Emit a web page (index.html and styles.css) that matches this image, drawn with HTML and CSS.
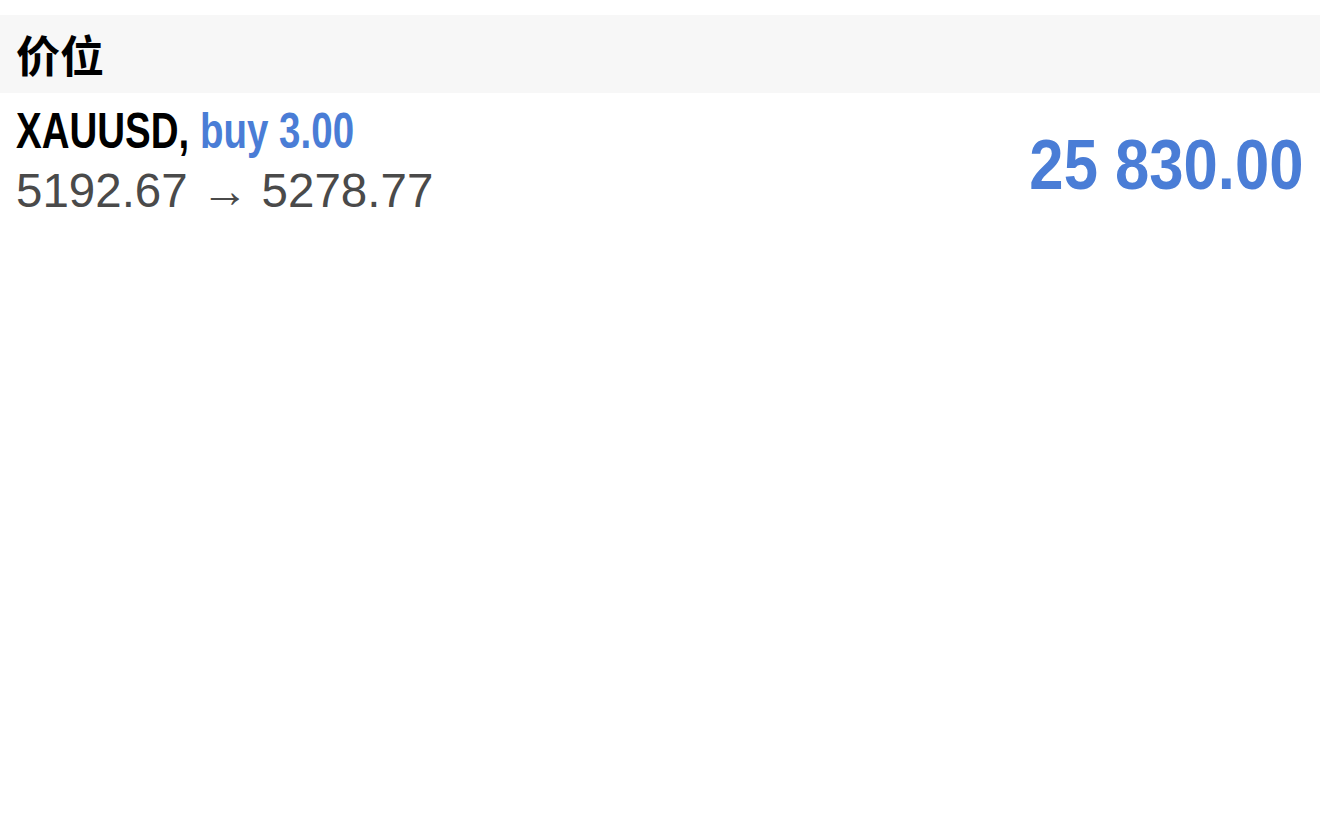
FILE: index.html
```html
<!DOCTYPE html>
<html lang="zh-CN">
<head>
<meta charset="utf-8">
<title>价位</title>
<link rel="stylesheet" href="styles.css">
</head>
<body>
<div class="page">
  <div class="section-header">价位</div>
  <div class="position-row">
    <div class="position-info">
      <div class="position-title"><span class="condensed title-text"><span class="symbol">XAUUSD,</span> <span class="side">buy 3.00</span></span></div>
      <div class="position-prices">5192.67 → 5278.77</div>
    </div>
    <div class="position-profit"><span class="condensed profit-text">25 830.00</span></div>
  </div>
</div>
</body>
</html>
```
FILE: styles.css
```css
html, body {
  margin: 0;
  padding: 0;
  background: #ffffff;
}
.page {
  padding-top: 15px;
  font-family: "Liberation Sans", "Noto Sans CJK SC", sans-serif;
}
.section-header {
  height: 78px;
  background: #f7f7f7;
  display: flex;
  align-items: center;
  padding-left: 16px;
  font-family: "Noto Sans CJK SC", sans-serif;
  font-weight: 700;
  font-size: 44px;
  color: #000;
}
.position-row {
  display: flex;
  justify-content: space-between;
  align-items: center;
  padding: 8px 17px 0 16px;
}
.position-info {
  display: flex;
  flex-direction: column;
}
.condensed {
  display: inline-block;
  white-space: nowrap;
}
.position-title {
  font-size: 50px;
  font-weight: 700;
  line-height: 60px;
  white-space: nowrap;
}
.title-text {
  transform: scaleX(0.77);
  transform-origin: left center;
}
.symbol { color: #000; }
.side { color: #4a7dd6; }
.position-prices {
  font-size: 47.5px;
  color: #4a4a4a;
  line-height: 60px;
}
.position-profit {
  font-size: 70px;
  font-weight: 700;
  color: #4a7dd6;
  line-height: 80px;
  padding-top: 8px;
}
.profit-text {
  transform: scaleX(0.88);
  transform-origin: right center;
}
```
